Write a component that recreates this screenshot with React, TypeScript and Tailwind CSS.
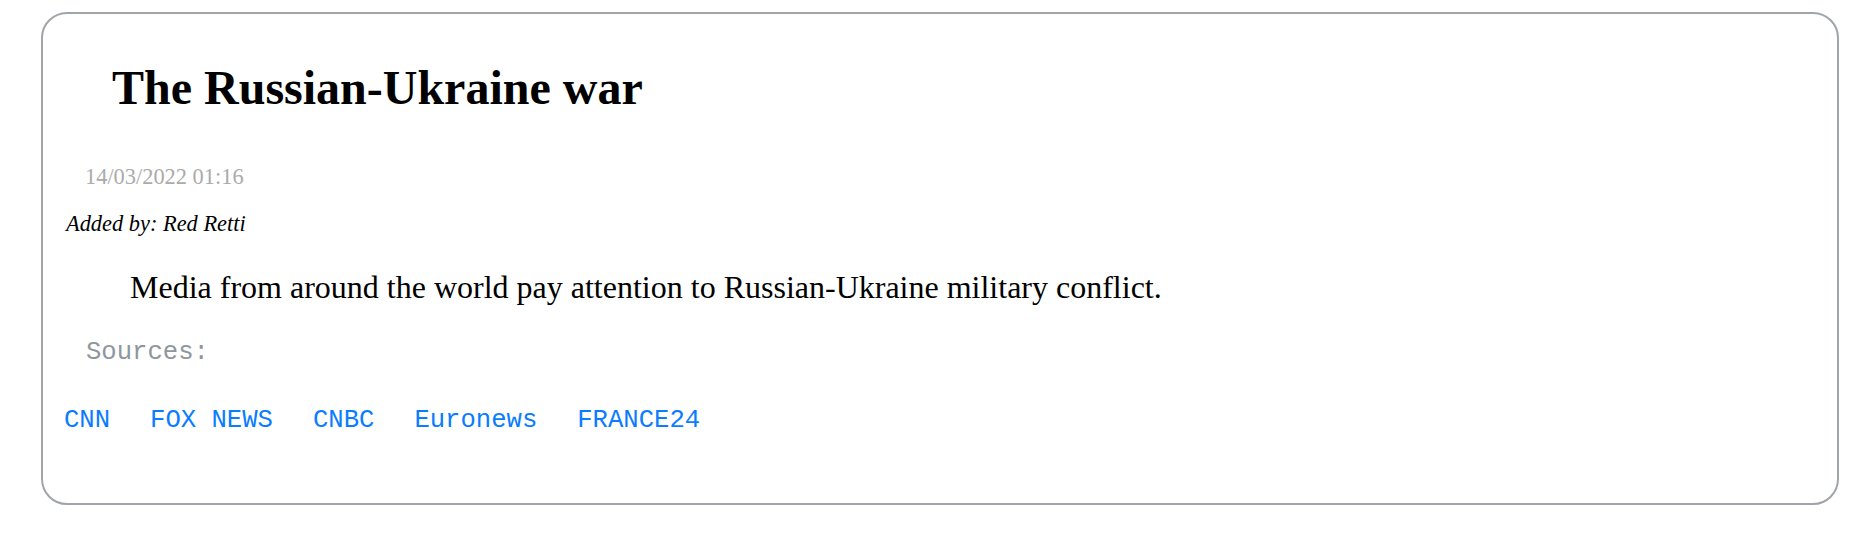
const sources = ["CNN", "FOX NEWS", "CNBC", "Euronews", "FRANCE24"];

export default function App() {
  return (
    <div className="min-h-screen bg-white pt-[12px] pl-[41px]">
      <article className="w-[1798px] h-[493px] rounded-[26px] border-2 border-[#a1a5aa] pt-[50px] font-['Liberation_Serif',serif] text-black">
        <h1 className="ml-[69px] text-[48px] font-bold leading-none">The Russian-Ukraine war</h1>

        <div className="ml-[42px] mt-[54px] text-[22.4px] leading-none text-[#ababab]">14/03/2022 01:16</div>

        <div className="ml-[23px] mt-[25px] text-[22.4px] italic leading-none">Added by: Red Retti</div>

        <p className="ml-[87px] mt-[35px] text-[32px] leading-none">
          Media from around the world pay attention to Russian-Ukraine military conflict.
        </p>

        <div className="ml-[43px] mt-[37px] font-['Liberation_Mono',monospace] text-[25.6px] leading-none text-[#8e979d]">
          Sources:
        </div>

        <div className="ml-[21px] mt-[43px] flex gap-10 font-['Liberation_Mono',monospace] text-[25.6px] leading-none text-[#0a7cff]">
          {sources.map((s) => (
            <a key={s} href="#" className="whitespace-pre">
              {s}
            </a>
          ))}
        </div>
      </article>
    </div>
  );
}
